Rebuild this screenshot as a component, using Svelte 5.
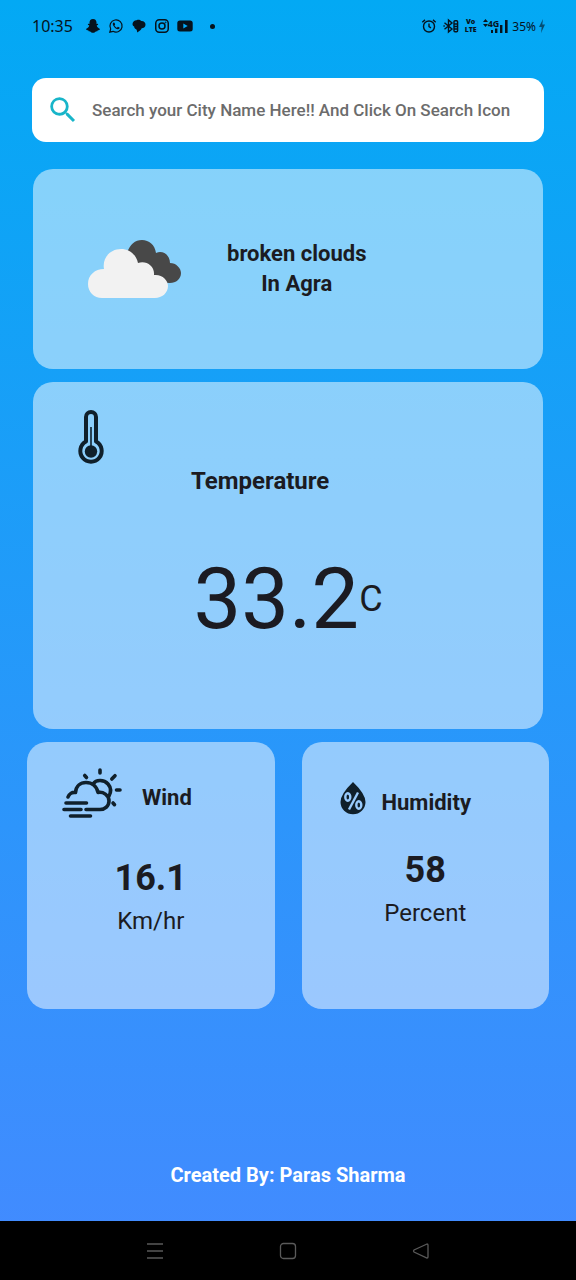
<script>
  let query = $state('');
  const city = 'Agra';
  const condition = 'broken clouds';
  const temperature = '33.2';
  const wind = '16.1';
  const humidity = 58;
</script>

<div class="screen">
  <header class="status">
    <div class="left">
      <time>10:35</time>
      <svg class="app" viewBox="0 0 16 16" aria-hidden="true">
        <path d="M8 1C5.600 1 4.500 2.700 4.500 4.500V6L3 5.700 2.900 6.700 4.300 7.600C3.800 9.300 2.700 10.300 1 10.900 1 11.800 2.300 12.100 3.200 12.300L3.700 13.200C5.400 12.800 6 14.800 8 14.800S10.600 12.800 12.300 13.200L12.800 12.300C13.700 12.100 15 11.800 15 10.900 13.300 10.300 12.200 9.300 11.700 7.600L13.100 6.700 13 5.700 11.500 6V4.500C11.500 2.700 10.400 1 8 1Z" />
      </svg>
      <svg class="app" viewBox="0 0 16 16" aria-hidden="true">
        <path d="M1.800 14.200 2.700 11A6.100 6.100 0 1 1 5 13.300Z" fill="none" stroke="currentColor" stroke-width="1.200" />
        <path d="M5.600 4.600C4.600 5 4.500 6.400 5.300 7.700 6.300 9.600 8.300 11.200 10 11.200 11 11.200 11.700 10.500 11.600 9.500L9.800 8.700 9 9.700C7.900 9.300 7 8.400 6.500 7.400L7.200 6.500 6.500 4.700Z" />
      </svg>
      <svg class="app" viewBox="0 0 16 16" aria-hidden="true">
        <path d="M5.500 2.200C8 1.200 9.500 2.300 10.300 3 13 2.900 14.800 4.700 14.500 7 14.200 9.300 12.500 10.200 10.700 10.300 10 12 8.500 13.500 6 14.400 6.300 13 5.900 12.300 5.200 11.300 3.600 10.800 3.200 9.700 3.200 8.600 0.500 7.500 1 2.600 5.500 2.200Z" />
      </svg>
      <svg class="app" viewBox="0 0 16 16" fill="none" stroke="currentColor" stroke-width="1.500" aria-hidden="true">
        <rect x="1.750" y="1.750" width="12.500" height="12.500" rx="3.500" />
        <circle cx="8" cy="8" r="3" />
        <circle cx="11.600" cy="4.400" r=".5" stroke-width=".8" />
      </svg>
      <svg class="app" viewBox="0 0 16 16" aria-hidden="true">
        <path fill-rule="evenodd" d="M3 2.500H13Q15.700 2.500 15.700 5V11Q15.700 13.500 13 13.500H3Q.3 13.500 .3 11V5Q.3 2.500 3 2.500ZM6.300 5.500V10.500L10.700 8Z" />
      </svg>
      <span class="dot"></span>
    </div>
    <div class="right">
      <svg class="app" viewBox="0 0 16 16" fill="none" stroke="currentColor" stroke-width="1.400" aria-hidden="true">
        <circle cx="8" cy="8.500" r="5.500" />
        <path d="M8 5.500V8.700L10 9.800M1.300 4.200 4 1.900M14.700 4.200 12 1.900" />
      </svg>
      <svg class="app" viewBox="0 0 16 16" fill="none" stroke="currentColor" stroke-width="1.400" aria-hidden="true">
        <path d="M1.500 4.700 9 11 5.500 14V2L9 5 1.500 11.300M.4 8H1.800" />
        <rect x="11" y="2.700" width="3.600" height="11" rx="1" />
        <path d="M11 6H14.600M11 8.500H14.600M11 11H14.600" />
      </svg>
      <span class="volte"><span>Vo</span><span>LTE</span></span>
      <span class="network">
        <svg class="updown" viewBox="0 0 5 8" aria-hidden="true"><path d="M0 3 2.500 0 5 3ZM0 5H5L2.500 8Z" /></svg>
        <span class="gen">4G</span>
        <svg class="bars" viewBox="0 0 18 14" aria-hidden="true"><path d="M0 11H2V14H0ZM4 9.500H6.400V14H4ZM9 6H11.400V14H9ZM14 1H16.600V14H14Z" /></svg>
      </span>
      <span class="battery">35%</span>
      <svg class="bolt" viewBox="0 0 8 14" aria-hidden="true"><path d="M5 0 1 8H3.700L3 14 7 5.500H4.300Z" /></svg>
    </div>
  </header>

  <main>
    <form class="search" onsubmit={(e) => e.preventDefault()}>
      <button type="submit" aria-label="Search">
        <svg viewBox="0 0 24 24" aria-hidden="true"><path d="M15.500 14h-.79l-.28-.27A6.471 6.471 0 0 0 16 9.500 6.500 6.500 0 1 0 9.500 16c1.610 0 3.090-.59 4.230-1.570l.27.28v.79l5 4.990L20.490 19l-4.990-5zm-6 0C7.010 14 5 11.990 5 9.500S7.010 5 9.500 5 14 7.010 14 9.500 11.990 14 9.500 14z" /></svg>
      </button>
      <input type="text" bind:value={query} aria-label="City name" placeholder="Search your City Name Here!! And Click On Search Icon" />
    </form>

    <section class="card wide summary">
      <svg class="clouds" viewBox="0 0 93 59" aria-hidden="true">
        <path fill="#484848" d="M39 13C42 4 47 0 54 0 61 0 67 5 68 13 75 10 82 15 82 23 88 23 93 28 93 33 93 39 88 43 82 43L60 42Z" />
        <path fill="#f2f2f2" d="M14 58C6 58 0 52 0 44 0 35 7 29 16 29 14 18 22 9 33 9 41 9 48 14 50 23 58 20 67 26 66 35 74 34 80 40 80 46 80 53 74 58 67 58Z" />
      </svg>
      <p>{condition}<br />In {city}</p>
    </section>

    <section class="card wide temp">
      <svg class="thermo" viewBox="0 0 26 54" aria-hidden="true">
        <path d="M8 31.500V7A5 5 0 0 1 18 7V31.500A10.700 10.700 0 1 1 8 31.500Z" fill="none" stroke="currentColor" stroke-width="4" stroke-linejoin="round" />
        <circle cx="13" cy="41.500" r="6.200" />
        <path d="M12.200 17H13.800V38H12.200Z" />
      </svg>
      <h2>Temperature</h2>
      <p class="reading"><span class="degrees">{temperature}</span><span class="unit">C</span></p>
    </section>

    <div class="pair">
      <section class="card small">
        <div class="title wind">
          <svg class="sun" viewBox="0 0 60 50" fill="none" stroke="currentColor" stroke-width="3.600" stroke-linecap="round" stroke-linejoin="round" aria-hidden="true">
            <path d="M38 2V5M22.700 7.500 24.500 9.500M53 7.700 49.800 11M54.500 22H58M51 35 52.500 36.700" />
            <path d="M31.500 15.500C34 11.500 42 11.500 46 16 49.500 20 49 24.500 46.800 28.500" />
            <path d="M6 29C7 26 10 24 13.500 24.500 14 18 18.500 14.500 24 14.500 30 14.500 34.700 18 36 24.500 41 23.500 47 27 47 33 47 38 43 41.500 38 41.500H24M4 35H24.500M2 41.500H19M8.500 48H28.500" />
          </svg>
          <h2>Wind</h2>
        </div>
        <p class="value">{wind}</p>
        <p class="label">Km/hr</p>
      </section>

      <section class="card small">
        <div class="title humidity">
          <svg class="drop" viewBox="0 0 26 34" aria-hidden="true">
            <path d="M13 1Q25.500 13 25.500 21A12.500 12.200 0 0 1 .5 21Q.5 13 13 1Z" />
            <g fill="none" stroke="#99cbfd" stroke-width="2.400">
              <ellipse cx="7.800" cy="16" rx="2.500" ry="3.700" />
              <ellipse cx="18.800" cy="24" rx="2.500" ry="3.700" />
              <path d="M18 11.500 9 28.500" />
            </g>
          </svg>
          <h2>Humidity</h2>
        </div>
        <p class="value">{humidity}</p>
        <p class="label">Percent</p>
      </section>
    </div>
  </main>

  <footer>Created By: Paras Sharma</footer>

  <nav>
    <button type="button" aria-label="Recent apps"><svg viewBox="0 0 18 18"><path d="M1 2H17M1 9H17M1 16H17" /></svg></button>
    <button type="button" aria-label="Home"><svg viewBox="0 0 18 18"><rect x="1.500" y="1.500" width="15" height="15" rx="3" /></svg></button>
    <button type="button" aria-label="Back"><svg viewBox="0 0 18 18"><path d="M15 2 2 8Q1 9 2 10L15 16Q16 16 16 15V3Q16 2 15 2Z" /></svg></button>
  </nav>
</div>

<style>
  :global(body) {
    margin: 0;
  }
  .screen {
    box-sizing: border-box;
    min-height: 100vh;
    display: flex;
    flex-direction: column;
    background: linear-gradient(#03a9f4, #448aff);
    color: #1b1b22;
    font-family: Roboto, "Liberation Sans", sans-serif;
  }
  svg {
    display: block;
    flex: none;
    fill: currentColor;
  }
  svg[fill="none"] {
    fill: none;
  }
  h2,
  p {
    margin: 0;
  }
  .status {
    display: flex;
    justify-content: space-between;
    align-items: center;
    height: 52px;
    padding: 0 30px 0 32px;
    color: #06131d;
    font-family: "Noto Sans", sans-serif;
  }
  .left,
  .right {
    display: flex;
    align-items: center;
    gap: 6px;
  }
  .left {
    gap: 7px;
  }
  time {
    font-size: 16px;
    margin-right: 5px;
  }
  .app {
    width: 16px;
    height: 16px;
  }
  .dot {
    width: 5px;
    height: 5px;
    margin-left: 10px;
    border-radius: 50%;
    background: currentColor;
  }
  .volte {
    display: flex;
    flex-direction: column;
    align-items: center;
    font-size: 7px;
    line-height: 8px;
    font-weight: 900;
  }
  .network {
    display: flex;
    align-items: center;
  }
  .updown {
    width: 5px;
    height: 8px;
    align-self: flex-start;
  }
  .gen {
    align-self: flex-start;
    font-size: 9px;
    line-height: 9px;
    font-weight: 700;
    margin-right: -8px;
  }
  .bars {
    width: 18px;
    height: 14px;
  }
  .battery {
    font-size: 12px;
    margin-left: -3px;
  }
  .bolt {
    width: 8px;
    height: 14px;
    margin-left: -4px;
    opacity: 0.6;
  }
  main {
    display: flex;
    flex-direction: column;
    gap: 13px;
    padding: 26px 27px 0;
  }
  .search {
    display: flex;
    align-items: center;
    height: 64px;
    margin: 0 5px 14px;
    border-radius: 14px;
    background: #fff;
  }
  .search button {
    display: flex;
    padding: 0;
    margin: 0 12px 0 14px;
    border: 0;
    background: none;
    color: #18b5c9;
  }
  .search button svg {
    width: 34px;
    height: 34px;
  }
  .search input {
    flex: 1;
    min-width: 0;
    padding: 0;
    border: 0;
    outline: 0;
    background: none;
    color: #1b1b22;
    font: 500 17px/24px Roboto, "Liberation Sans", sans-serif;
  }
  .search input::placeholder {
    color: #6c6c6c;
    opacity: 1;
  }
  .card {
    box-sizing: border-box;
    border-radius: 20px;
    background: rgba(255, 255, 255, 0.5);
  }
  .wide {
    margin: 0 6px;
  }
  .summary {
    display: flex;
    align-items: center;
    gap: 46px;
    min-height: 200px;
    padding: 0 55px;
  }
  .clouds {
    width: 93px;
    height: 59px;
  }
  .summary p {
    font-size: 22px;
    line-height: 30px;
    font-weight: 700;
    text-align: center;
  }
  h2 {
    font-size: 24px;
    line-height: 28px;
    font-weight: 700;
  }
  .temp {
    min-height: 347px;
    padding: 28px 45px 0;
  }
  .thermo {
    width: 26px;
    height: 54px;
    overflow: visible;
    color: #10202b;
  }
  .temp h2 {
    padding-left: 113px;
    margin-top: 3px;
  }
  .reading {
    display: flex;
    justify-content: center;
    align-items: center;
    margin-top: 54px;
    line-height: 100px;
  }
  .degrees {
    font-size: 85px;
  }
  .unit {
    font-size: 36px;
  }
  .pair {
    display: grid;
    grid-template-columns: 1fr 1fr;
    gap: 27px;
  }
  .small {
    min-height: 267px;
    padding-top: 26px;
    text-align: center;
  }
  .title {
    display: flex;
    align-items: center;
  }
  .title h2 {
    padding-top: 10px;
    font-size: 22px;
  }
  .wind {
    gap: 20px;
    padding-left: 35px;
    margin-bottom: 38px;
  }
  .humidity {
    gap: 16px;
    padding: 11px 0 0 38px;
    margin-bottom: 31px;
  }
  .sun {
    width: 60px;
    height: 50px;
    color: #10202b;
  }
  .drop {
    width: 26px;
    height: 34px;
    color: #10202b;
  }
  .value {
    font-size: 36px;
    line-height: 44px;
    font-weight: 700;
  }
  .label {
    font-size: 24px;
    line-height: 42px;
  }
  footer {
    margin-top: auto;
    padding: 24px 0 34px;
    color: #fff;
    font-size: 20px;
    line-height: 24px;
    font-weight: 700;
    text-align: center;
  }
  nav {
    display: flex;
    justify-content: center;
    align-items: center;
    gap: 115px;
    height: 59px;
    background: #000;
  }
  nav button {
    display: flex;
    padding: 0;
    border: 0;
    background: none;
    color: #5a5a5a;
  }
  nav svg {
    width: 18px;
    height: 18px;
    fill: none;
    stroke: currentColor;
    stroke-width: 1.300;
  }
</style>
